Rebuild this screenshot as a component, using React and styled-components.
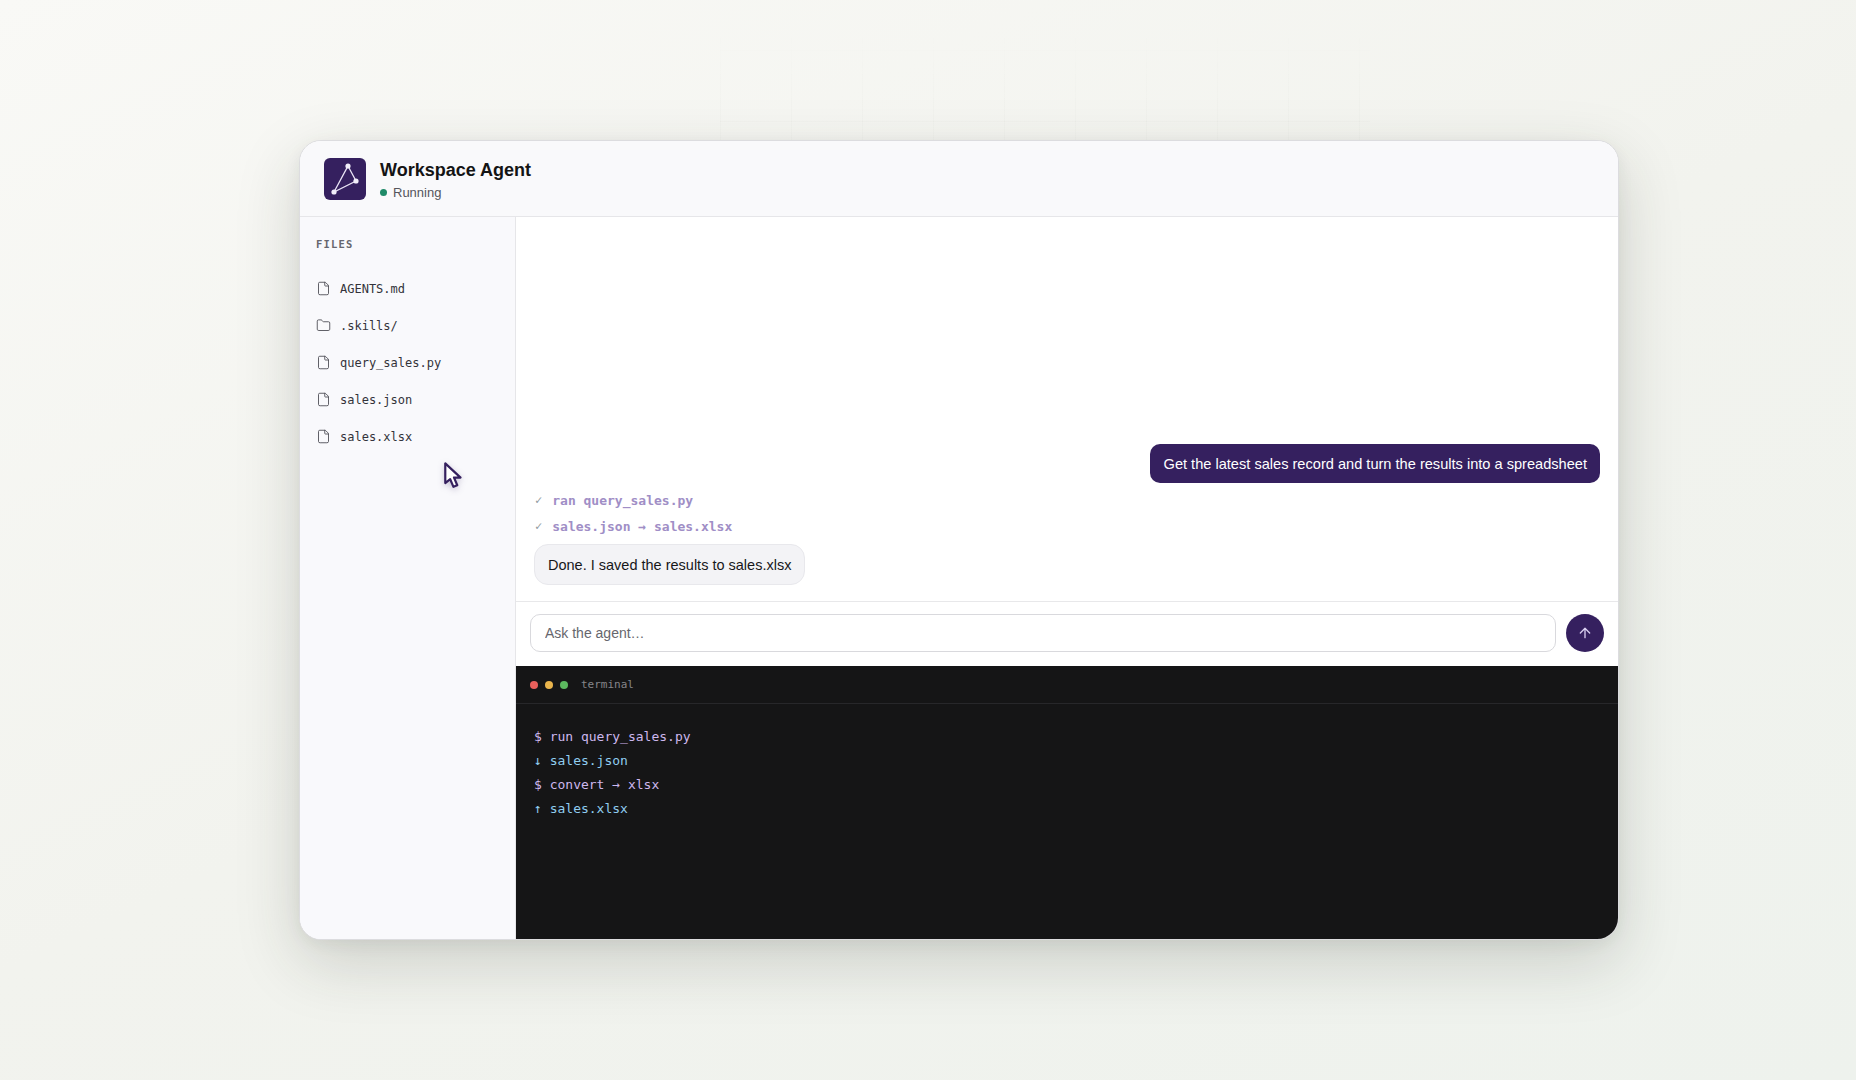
import React from "react";
import styled, { createGlobalStyle } from "styled-components";
import { ArrowUp, File, Folder } from "lucide-react";

const PURPLE = "#35205f";
const MONO = `"DejaVu Sans Mono", "Liberation Mono", monospace`;

const GlobalStyle = createGlobalStyle`
  html, body {
    margin: 0;
    height: 100%;
  }
  * {
    box-sizing: border-box;
  }
  body {
    font-family: "Liberation Sans", Arial, sans-serif;
    color: #141414;
  }
`;

const Page = styled.main`
  position: relative;
  width: 1856px;
  height: 1080px;
  overflow: hidden;
  padding: 140px 237px 140px 299px;
  display: flex;
  background: linear-gradient(155deg, #f9f9f6 0%, #f2f3ee 50%, #eef2ed 100%);

  &::before {
    content: "";
    position: absolute;
    left: 720px;
    top: 20px;
    width: 650px;
    height: 120px;
    background-image:
      linear-gradient(to right, rgba(120, 125, 110, 0.025) 1px, transparent 1px),
      linear-gradient(to bottom, rgba(120, 125, 110, 0.025) 1px, transparent 1px);
    background-size: 71px 71px;
    background-position: 0 30px;
    mask-image: linear-gradient(to bottom, transparent 10%, black 70%);
  }
`;

const Window = styled.section`
  position: relative;
  flex: 1;
  display: flex;
  flex-direction: column;
  border: 1px solid #dcdcdf;
  border-radius: 22px;
  overflow: hidden;
  background: #ffffff;
  box-shadow: 0 22px 64px rgba(40, 45, 35, 0.18), 0 4px 16px rgba(40, 45, 35, 0.06);
`;

const Header = styled.header`
  height: 76px;
  flex: none;
  display: flex;
  align-items: center;
  gap: 14px;
  padding: 0 24px;
  background: #f9f9fb;
  border-bottom: 1px solid #e6e6e9;
`;

const Logo = styled.div`
  width: 42px;
  height: 42px;
  border-radius: 6px;
  background: ${PURPLE};
  display: flex;
`;

const TitleBlock = styled.div`
  display: flex;
  flex-direction: column;
  gap: 4px;
  padding-top: 2px;
`;

const Title = styled.h1`
  margin: 0;
  font-size: 18px;
  line-height: 22px;
  font-weight: 700;
  color: #141414;
`;

const Status = styled.div`
  display: flex;
  align-items: center;
  gap: 6px;
  font-size: 13px;
  line-height: 16px;
  color: #55555c;
`;

const StatusDot = styled.span`
  width: 7px;
  height: 7px;
  border-radius: 50%;
  background: #1f8a68;
`;

const Body = styled.div`
  flex: 1;
  min-height: 0;
  display: flex;
`;

const Sidebar = styled.aside`
  width: 216px;
  flex: none;
  padding: 20px 16px;
  background: #f9f9fc;
  border-right: 1px solid #e6e6e9;
`;

const SidebarLabel = styled.div`
  font-family: ${MONO};
  font-size: 10.5px;
  font-weight: 700;
  line-height: 14px;
  letter-spacing: 1.2px;
  color: #66666e;
  margin-bottom: 19px;
`;

const FileList = styled.ul`
  list-style: none;
  margin: 0;
  padding: 0;
  display: flex;
  flex-direction: column;
`;

const FileRow = styled.li`
  height: 37px;
  display: flex;
  align-items: center;
  gap: 9px;
  font-family: ${MONO};
  font-size: 12px;
  color: #33333a;

  svg {
    flex: none;
    color: #4a4a52;
  }
`;

const Cursor = styled.svg`
  position: absolute;
  left: 142px;
  top: 320px;
  width: 24px;
  height: 31px;
  filter: drop-shadow(0 2px 3px rgba(53, 32, 95, 0.25));
`;

const Main = styled.div`
  flex: 1;
  min-width: 0;
  display: flex;
  flex-direction: column;
`;

const Messages = styled.div`
  flex: 1;
  min-height: 0;
  display: flex;
  flex-direction: column;
  justify-content: flex-end;
  align-items: flex-start;
  padding: 16px 18px 16px 18px;
`;

const UserBubble = styled.div`
  align-self: flex-end;
  padding: 0 13px 0 14px;
  height: 39px;
  display: flex;
  align-items: center;
  border-radius: 10px;
  background: ${PURPLE};
  color: #ffffff;
  font-size: 14.6px;
  margin-bottom: 4px;
`;

const Step = styled.div`
  height: 26px;
  display: flex;
  align-items: center;
  gap: 10px;
  font-family: ${MONO};
  font-size: 13px;
  font-weight: 700;
  color: #a08ec6;
  margin-left: 1px;
`;

const StepCheck = styled.span`
  font-weight: 400;
  font-size: 12px;
  color: #8f9aa0;
`;

const AgentBubble = styled.div`
  margin-top: 5px;
  height: 41px;
  display: flex;
  align-items: center;
  padding: 0 13px 0 13px;
  border: 1px solid #e8e8ec;
  border-radius: 14px;
  background: #f3f3f6;
  font-size: 14.5px;
  color: #17171a;
`;

const Composer = styled.form`
  flex: none;
  height: 65px;
  display: flex;
  align-items: flex-start;
  gap: 10px;
  padding: 12px 14px 14px;
  border-top: 1px solid #e8e8ea;
`;

const PromptInput = styled.input`
  flex: 1;
  height: 38px;
  padding: 0 14px;
  border: 1px solid #d9d9dd;
  border-radius: 10px;
  font-family: inherit;
  font-size: 14px;
  outline: none;

  &::placeholder {
    color: #66666d;
    opacity: 1;
  }
`;

const SendButton = styled.button`
  width: 38px;
  height: 38px;
  flex: none;
  padding: 0;
  border: none;
  border-radius: 50%;
  background: ${PURPLE};
  color: #d9cff0;
  display: flex;
  align-items: center;
  justify-content: center;
`;

const Terminal = styled.section`
  flex: none;
  height: 273px;
  background: #151516;
  font-family: ${MONO};
`;

const TerminalBar = styled.div`
  height: 38px;
  display: flex;
  align-items: center;
  padding: 0 14px;
  border-bottom: 1px solid #27272a;
`;

const Dot = styled.span`
  width: 8px;
  height: 8px;
  border-radius: 50%;
  margin-right: 7px;
  background: ${(p) => p.$color};
`;

const TerminalLabel = styled.span`
  margin-left: 6px;
  font-size: 11px;
  color: #85858a;
`;

const TerminalBody = styled.div`
  padding: 21px 18px;
`;

const TerminalLine = styled.div`
  height: 24px;
  line-height: 24px;
  font-size: 13px;
  white-space: pre;
  color: ${(p) => (p.$output ? "#90cdf0" : "#cdb8ee")};
`;

const files = [
  { name: "AGENTS.md", icon: File },
  { name: ".skills/", icon: Folder },
  { name: "query_sales.py", icon: File },
  { name: "sales.json", icon: File },
  { name: "sales.xlsx", icon: File },
];

const steps = ["ran query_sales.py", "sales.json → sales.xlsx"];

const terminalLines = [
  { text: "$ run query_sales.py" },
  { text: "↓ sales.json", output: true },
  { text: "$ convert → xlsx" },
  { text: "↑ sales.xlsx", output: true },
];

const LogoMark = () => (
  <svg viewBox="0 0 42 42" width="42" height="42" fill="none">
    <path d="M24 8 L32 23 L10 34 Z" stroke="#e9e3f5" strokeWidth="1.3" />
    <circle cx="24" cy="8" r="2.6" fill="#f2eefa" />
    <circle cx="32" cy="23" r="2.6" fill="#f2eefa" />
    <circle cx="10" cy="34" r="2.6" fill="#f2eefa" />
  </svg>
);

const App = () => {
  return (
    <Page>
      <GlobalStyle />
      <Window>
        <Header>
          <Logo>
            <LogoMark />
          </Logo>
          <TitleBlock>
            <Title>Workspace Agent</Title>
            <Status>
              <StatusDot />
              Running
            </Status>
          </TitleBlock>
        </Header>
        <Body>
          <Sidebar>
            <SidebarLabel>FILES</SidebarLabel>
            <FileList>
              {files.map(({ name, icon: Icon }) => (
                <FileRow key={name}>
                  <Icon size={15} strokeWidth={1.4} />
                  {name}
                </FileRow>
              ))}
            </FileList>
          </Sidebar>
          <Main>
            <Messages>
              <UserBubble>Get the latest sales record and turn the results into a spreadsheet</UserBubble>
              {steps.map((step) => (
                <Step key={step}>
                  <StepCheck>✓</StepCheck>
                  {step}
                </Step>
              ))}
              <AgentBubble>Done. I saved the results to sales.xlsx</AgentBubble>
            </Messages>
            <Composer onSubmit={(e) => e.preventDefault()}>
              <PromptInput placeholder="Ask the agent…" />
              <SendButton type="submit" aria-label="Send">
                <ArrowUp size={16} strokeWidth={2} />
              </SendButton>
            </Composer>
            <Terminal>
              <TerminalBar>
                <Dot $color="#e8605c" />
                <Dot $color="#e9b44c" />
                <Dot $color="#5cb85f" />
                <TerminalLabel>terminal</TerminalLabel>
              </TerminalBar>
              <TerminalBody>
                {terminalLines.map((line) => (
                  <TerminalLine key={line.text} $output={line.output}>
                    {line.text}
                  </TerminalLine>
                ))}
              </TerminalBody>
            </Terminal>
          </Main>
        </Body>
        <Cursor viewBox="0 0 22 28" fill="none">
          <path
            d="M3 2 L3 20 L7.5 16.5 L10.5 23.5 L14 22 L11 15 L17 15 Z"
            fill="#ffffff"
            stroke={PURPLE}
            strokeWidth="2"
            strokeLinejoin="round"
          />
        </Cursor>
      </Window>
    </Page>
  );
};

export default App;
